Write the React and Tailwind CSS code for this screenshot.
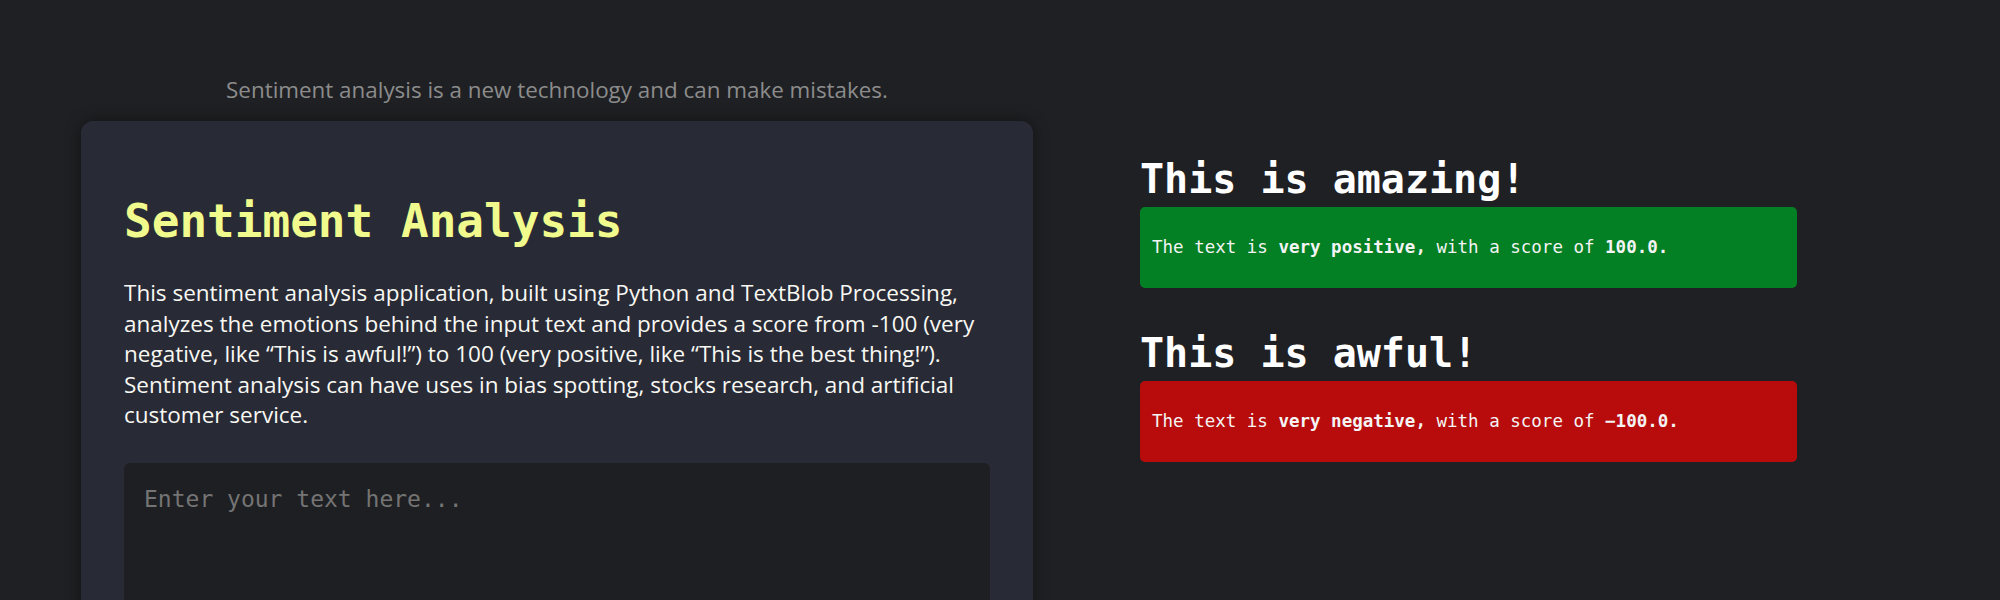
import React from "react";

const mono = "font-['DejaVu_Sans_Mono','Liberation_Mono',monospace]";
const sans = "font-['Open_Sans','Noto_Sans',sans-serif]";

const ResultCard = ({ title, label, score, tone }) => (
  <div>
    <h1 className={`${mono} text-[40px] leading-[46px] font-bold text-white`}>{title}</h1>
    <div
      className={`${mono} mt-[5px] rounded-[5px] px-[12px] py-[30px] text-[17.5px] leading-[21px] text-[#f4f4f4] ${
        tone === "good" ? "bg-[#037f24]" : "bg-[#b80c0c]"
      }`}
    >
      The text is <b>{label},</b> with a score of <b>{score}.</b>
    </div>
  </div>
);

export default function App() {
  return (
    <div className="min-h-[600px] bg-[#1f2023] pl-[81px] pt-[75px] flex items-start overflow-hidden">
      {/* left: intro + input */}
      <div className="w-[952px] flex flex-col shrink-0">
        <p className={`${sans} text-center text-[22.4px] leading-[30px] text-[#8c8c8c]`}>
          Sentiment analysis is a new technology and can make mistakes.
        </p>
        <div className="mt-[16px] rounded-[12px] bg-[#282a36] shadow-[0_0_16px_rgba(0,0,0,0.45)] px-[43px] pt-[73px] pb-[43px]">
          <h1 className={`${mono} text-[46px] leading-[54px] font-bold text-[#f1fa8c]`}>
            Sentiment Analysis
          </h1>
          <p className={`${sans} mt-[30px] text-[22.5px] leading-[30.5px] text-[#f8f8f2]`}>
            This sentiment analysis application, built using Python and TextBlob Processing, analyzes the
            emotions behind the input text and provides a score from -100 (very negative, like “This is
            awful!”) to 100 (very positive, like “This is the best thing!”). Sentiment analysis can have uses
            in bias spotting, stocks research, and artificial customer service.
          </p>
          <textarea
            placeholder="Enter your text here..."
            className={`${mono} mt-[32px] block w-full h-[220px] resize-none rounded-[6px] bg-[#1e1f22] px-[20px] py-[20px] text-[23px] leading-[32px] text-white placeholder:text-[#747474] outline-none`}
          />
        </div>
      </div>

      {/* right: example results */}
      <div className="ml-[107px] w-[657px] pt-[81px] flex flex-col gap-[42px] shrink-0">
        <ResultCard title="This is amazing!" label="very positive" score="100.0" tone="good" />
        <ResultCard title="This is awful!" label="very negative" score="−100.0" tone="bad" />
      </div>
    </div>
  );
}
